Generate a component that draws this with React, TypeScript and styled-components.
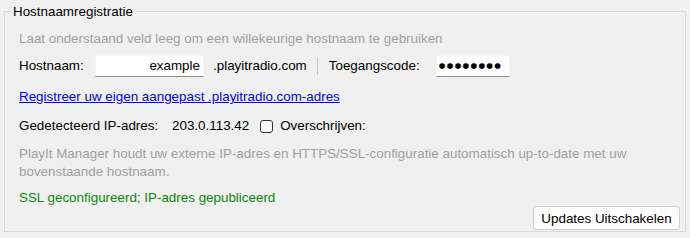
import { createGlobalStyle } from 'styled-components';
import styled from 'styled-components';

const GlobalStyle = createGlobalStyle`
  html, body {
    margin: 0;
    padding: 0;
    background: #f0f0f0;
  }
  body {
    font-family: 'Liberation Sans', Arial, sans-serif;
    font-size: 13.4px;
    color: #000;
  }
`;

const Page = styled.div`
  width: 690px;
  height: 238px;
  padding: 4px 4px 0 4px;
  box-sizing: border-box;
`;

const Group = styled.fieldset`
  margin: 0;
  height: 228px;
  box-sizing: border-box;
  border: 1px solid #dcdcdc;
  padding: 0 5px 3px 14px;
  display: flex;
  flex-direction: column;
`;

const Legend = styled.legend`
  padding: 0 2px;
  margin-left: -8px;
  line-height: 15px;
`;

const Hint = styled.div`
  color: #a0a0a0;
  margin-top: 12px;
  line-height: 16px;
`;

const Row = styled.div<{ $top: number }>`
  display: flex;
  align-items: center;
  margin-top: ${(p) => p.$top}px;
  line-height: 16px;
  white-space: nowrap;
`;

const Label = styled.span<{ $width?: number }>`
  width: ${(p) => (p.$width ? `${p.$width}px` : 'auto')};
`;

const TextBox = styled.div<{ $width: number; $align: 'left' | 'right' }>`
  width: ${(p) => p.$width}px;
  height: 22px;
  box-sizing: border-box;
  background: #fff;
  border: 1px solid #f4f4f4;
  border-bottom: 1px solid #8a8a8a;
  display: flex;
  align-items: center;
  justify-content: ${(p) => (p.$align === 'right' ? 'flex-end' : 'flex-start')};
  padding: 0 3px 0 2px;
  overflow: hidden;
`;

const Dots = styled.span`
  font-size: 7.6px;
  letter-spacing: 1.3px;
  font-family: 'DejaVu Sans', sans-serif;
  line-height: 10px;
`;

const Suffix = styled.span`
  margin-left: 9px;
`;

const Divider = styled.span`
  width: 1px;
  height: 18px;
  background: #c8c8c8;
  margin: 0 11px 0 10px;
`;

const Link = styled.a`
  color: #0000ff;
  text-decoration: underline;
  cursor: pointer;
  margin-top: 12px;
  line-height: 16px;
  align-self: flex-start;
`;

const Box = styled.span`
  width: 11px;
  height: 11px;
  border: 1px solid #333;
  border-radius: 3px;
  background: #fff;
  margin: 0 7px 0 11px;
`;

const Note = styled.p`
  color: #a0a0a0;
  margin: 11px 0 0 0;
  line-height: 18px;
  width: 620px;
`;

const Status = styled.div`
  color: #0a8a0a;
  margin-top: 9px;
  line-height: 16px;
`;

const Footer = styled.div`
  margin-top: auto;
  display: flex;
  justify-content: flex-end;
`;

const Button = styled.button`
  font: inherit;
  width: 147px;
  height: 24px;
  background: #fdfdfd;
  border: 1px solid #d0d0d0;
  border-radius: 3px;
  color: #000;
  padding: 0;
`;

export default function App() {
  return (
    <>
      <GlobalStyle />
      <Page>
        <Group>
          <Legend>Hostnaamregistratie</Legend>
          <Hint>Laat onderstaand veld leeg om een willekeurige hostnaam te gebruiken</Hint>
          <Row $top={8}>
            <Label $width={76}>Hostnaam:</Label>
            <TextBox $width={109} $align="right">example</TextBox>
            <Suffix>.playitradio.com</Suffix>
            <Divider />
            <Label $width={107}>Toegangscode:</Label>
            <TextBox $width={74} $align="left">
              <Dots>●●●●●●●●</Dots>
            </TextBox>
          </Row>
          <Link>Registreer uw eigen aangepast .playitradio.com-adres</Link>
          <Row $top={13}>
            <Label $width={153}>Gedetecteerd IP-adres:</Label>
            <span>203.0.113.42</span>
            <Box />
            <span>Overschrijven:</span>
          </Row>
          <Note>
            PlayIt Manager houdt uw externe IP-adres en HTTPS/SSL-configuratie automatisch up-to-date met uw
            bovenstaande hostnaam.
          </Note>
          <Status>SSL geconfigureerd; IP-adres gepubliceerd</Status>
          <Footer>
            <Button>Updates Uitschakelen</Button>
          </Footer>
        </Group>
      </Page>
    </>
  );
}
